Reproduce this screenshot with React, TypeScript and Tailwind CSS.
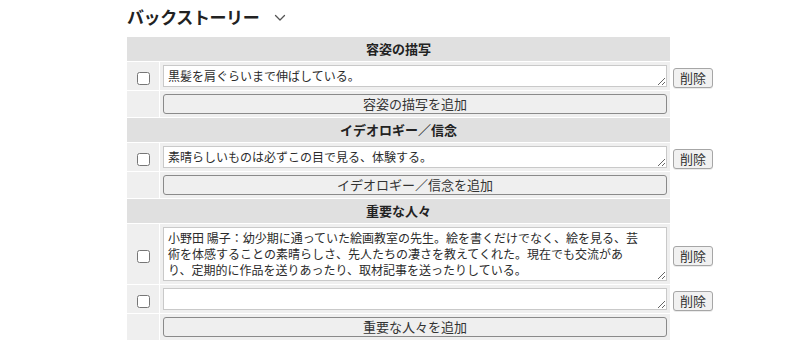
import React from "react";

type Entry = { id: string; text: string; rows: number };

type Section = {
  title: string;
  addLabel: string;
  entries: Entry[];
};

const sections: Section[] = [
  {
    title: "容姿の描写",
    addLabel: "容姿の描写を追加",
    entries: [{ id: "a1", text: "黒髪を肩ぐらいまで伸ばしている。", rows: 1 }],
  },
  {
    title: "イデオロギー／信念",
    addLabel: "イデオロギー／信念を追加",
    entries: [{ id: "b1", text: "素晴らしいものは必ずこの目で見る、体験する。", rows: 1 }],
  },
  {
    title: "重要な人々",
    addLabel: "重要な人々を追加",
    entries: [
      {
        id: "c1",
        text: "小野田 陽子：幼少期に通っていた絵画教室の先生。絵を書くだけでなく、絵を見る、芸術を体感することの素晴らしさ、先人たちの凄さを教えてくれた。現在でも交流があり、定期的に作品を送りあったり、取材記事を送ったりしている。",
        rows: 3,
      },
      { id: "c2", text: "", rows: 1 },
    ],
  },
];

function EntryRow({ entry }: { entry: Entry }) {
  const [value, setValue] = React.useState(entry.text);
  return (
    <tr>
      <td className="w-[32px] bg-[#efefef] text-center align-middle">
        <input type="checkbox" className="m-0 h-[13px] w-[13px] align-middle" />
      </td>
      <td className="bg-[#efefef] px-[3px] py-[3px]">
        <textarea
          rows={entry.rows}
          value={value}
          onChange={(e) => setValue(e.target.value)}
          className="block w-full border border-[#c9c9c9] bg-white py-[2px] pl-[4px] pr-[20px] text-[12px] leading-[16px] text-[#2b2b2b]"
        />
      </td>
      <td className="pl-[2px] align-middle">
        <button className="rounded-[3px] border border-[#a6a6a6] bg-[#f1f1f1] px-[6px] py-[1px] text-[13px] leading-[16px] text-[#333] shadow-[0_1px_0_rgba(0,0,0,0.08)]">
          削除
        </button>
      </td>
    </tr>
  );
}

function SectionRows({ section }: { section: Section }) {
  return (
    <>
      <tr>
        <th colSpan={2} className="h-[24px] bg-[#e0e0e0] text-center text-[13px] font-bold leading-[18px] text-[#222]">
          {section.title}
        </th>
        <td />
      </tr>
      {section.entries.map((entry) => (
        <EntryRow key={entry.id} entry={entry} />
      ))}
      <tr>
        <td className="bg-[#efefef]" />
        <td className="bg-[#efefef] px-[3px] py-[3px]">
          <button className="block h-[20px] w-full rounded-[3px] border border-[#8a8a8a] bg-[#efefef] text-[13px] leading-[16px] text-[#333]">
            {section.addLabel}
          </button>
        </td>
        <td />
      </tr>
    </>
  );
}

export default function App() {
  const [open, setOpen] = React.useState(true);

  return (
    <div className="min-h-[344px] bg-white font-['Noto_Sans_CJK_JP','Noto_Sans',sans-serif] text-[#222]">
      <div className="pl-[127px] pt-[4px]">
        <button
          onClick={() => setOpen(!open)}
          className="flex items-center gap-[15px] text-[17px] font-bold leading-[26px] text-[#222]"
        >
          <span className="tracking-[-0.4px]">バックストーリー</span>
          <svg width="12" height="8" viewBox="0 0 12 8" fill="none" className="mt-[1px]">
            <path d="M1.5 1.5 L6 6 L10.5 1.5" stroke="#555" strokeWidth="1.3" strokeLinecap="round" strokeLinejoin="round" />
          </svg>
        </button>
      </div>
      {open && (
        <table className="ml-[126px] mt-[6px] border-separate border-spacing-[1px]">
          <colgroup>
            <col className="w-[32px]" />
            <col className="w-[510px]" />
            <col />
          </colgroup>
          <tbody>
            {sections.map((section) => (
              <SectionRows key={section.title} section={section} />
            ))}
          </tbody>
        </table>
      )}
    </div>
  );
}
